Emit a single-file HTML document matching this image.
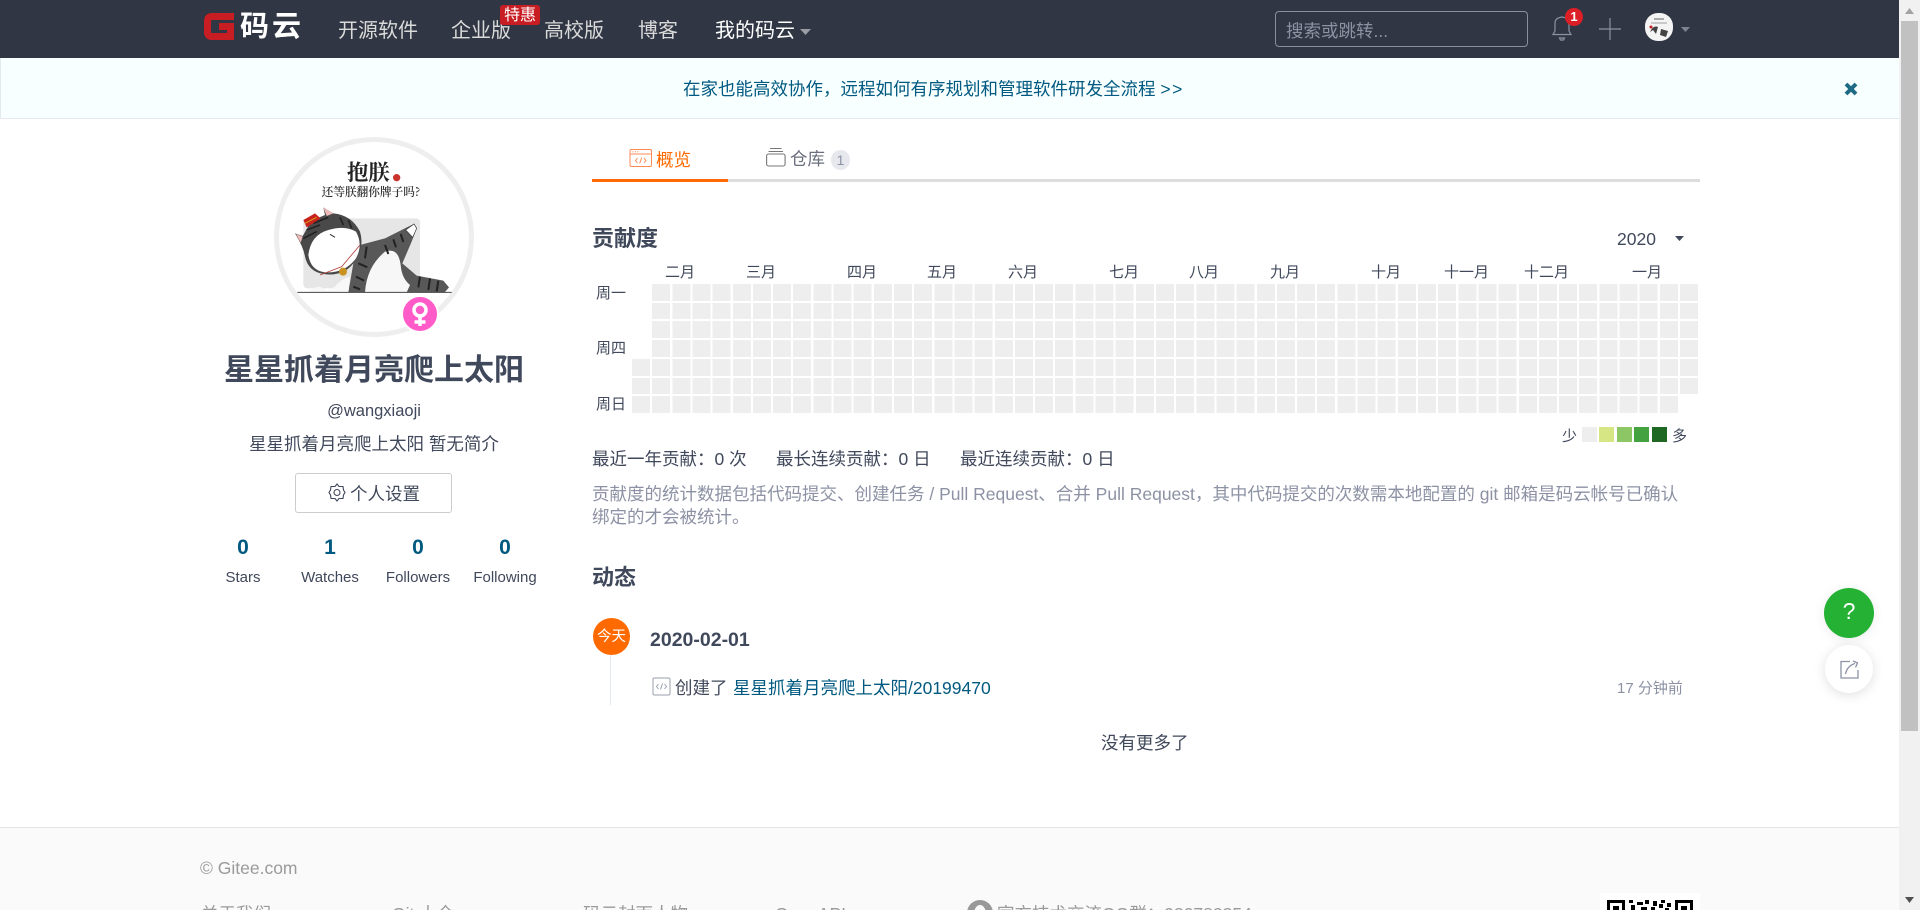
<!DOCTYPE html>
<html lang="zh-CN"><head><meta charset="utf-8"><title>星星抓着月亮爬上太阳 - 码云 Gitee</title>
<style>
html,body{margin:0;padding:0;width:1920px;height:910px;overflow:hidden;background:#fff}
body{position:relative;font-family:"Liberation Sans","Noto Sans CJK SC",sans-serif;font-size:17.5px;color:#40485b}
.a{position:absolute;display:block}
.t{position:absolute;white-space:nowrap;line-height:24px;height:24px}
.c{transform:translateX(-50%)}
.n{color:#dadada;font-size:20px;top:19px}
.m{font-size:15px;top:261px}
.w{font-size:15px;left:596px}
.b{font-weight:700}
.f{color:#9a9a9a}
svg{position:absolute;display:block;overflow:visible}
</style></head><body>
<!-- header -->
<div class="a" style="left:0;top:0;width:1899px;height:58px;background:#303643"></div>
<svg style="left:204px;top:13px" width="30" height="27" viewBox="0 0 30 27"><path d="M30 3.500H8Q3.500 3.500 3.500 8V19Q3.500 23.500 8 23.500H26.500V13.500H15" fill="none" stroke="#c71d23" stroke-width="7"/></svg>
<span class="t b" style="left:240px;top:12px;font-size:29px;height:30px;line-height:30px;color:#fff;letter-spacing:3px">码云</span>
<span class="t n" style="left:338px">开源软件</span>
<span class="t n" style="left:451px">企业版</span>
<span class="a" style="left:500px;top:5px;width:40px;height:20px;background:#c71d23;border-radius:3px"></span>
<span class="t" style="left:504px;top:4px;color:#fff;font-size:16px">特惠</span>
<span class="t n" style="left:544px">高校版</span>
<span class="t n" style="left:638px">博客</span>
<span class="t n" style="left:715px;color:#fff">我的码云</span>
<svg style="left:800px;top:29px" width="11" height="6"><path d="M0 0H11L5.500 6Z" fill="#9a9ca3"/></svg>
<div class="a" style="left:1275px;top:11px;width:251px;height:34px;border:1px solid #8b8f9a;border-radius:4px"></div>
<span class="t" style="left:1286px;top:19px;color:#8c92a4">搜索或跳转...</span>
<svg style="left:1551px;top:15px" width="22" height="26" viewBox="0 0 22 26" fill="none" stroke="#8c92a4" stroke-width="1.200"><path d="M2 19.500H20L18 16V8Q18 3 11 2Q4 3 4 8V16Z"/><path d="M8.500 23H13.500L12.500 25H9.500Z"/></svg>
<span class="a" style="left:1565px;top:8px;width:18px;height:18px;border-radius:9px;background:#dc1f26"></span>
<span class="t b" style="left:1565px;top:5px;width:18px;text-align:center;color:#fff;font-size:13px">1</span>
<svg style="left:1599px;top:18px" width="22" height="22"><path d="M0 11H22M11 0V22" stroke="#8c92a4" stroke-width="1.200"/></svg>
<svg style="left:1645px;top:13px" width="28" height="28" viewBox="0 0 28 28"><rect width="28" height="28" rx="13" fill="#f4f4f4"/><path d="M5 19Q8 12 13 14L11 21L8 17ZM16 16L23 18L21 24L15 22Z" fill="#444"/><path d="M9 6H19" stroke="#aaa" stroke-width="2"/><path d="M6 10H22" stroke="#bbb" stroke-width="1.500"/><circle cx="6" cy="14" r="1.500" fill="#c71d23"/></svg>
<svg style="left:1681px;top:27px" width="9" height="5"><path d="M0 0H9L4.500 5Z" fill="#7f838e"/></svg>
<!-- banner -->
<div class="a" style="left:0;top:58px;width:1898px;height:60px;background:#f7ffff;border:1px solid #e3e9ed;border-top:0"></div>
<span class="t" style="left:683px;top:77px;color:#005980">在家也能高效协作&#xFF0C;远程如何有序规划和管理软件研发全流程 <span style="letter-spacing:1.500px">&gt;&gt;</span></span>
<svg style="left:1844px;top:82px" width="14" height="14"><path d="M2 2L12 12M12 2L2 12" stroke="#1f6a85" stroke-width="4"/></svg>
<!-- avatar -->
<div class="a" style="left:274px;top:137px;width:190px;height:190px;border:5px solid #eee;border-radius:50%"></div>
<svg style="left:270px;top:130px" width="210" height="210" viewBox="0 0 630 630">
<defs><filter id="bl"><feGaussianBlur stdDeviation="1"/></filter></defs>
<g filter="url(#bl)">
<rect x="100" y="265" width="350" height="210" rx="12" fill="#e6e6e6"/>
<text x="231" y="150" font-family="'Noto Serif CJK SC',serif" font-weight="700" font-size="64" fill="#222">抱朕</text>
<circle cx="380" cy="143" r="11" fill="#c9342f"/>
<text x="155" y="198" font-family="'Noto Serif CJK SC',serif" font-weight="600" font-size="35" fill="#333">还等朕翻你牌子吗?</text>
<path d="M235 487L250 400L270 345L345 325L415 290L432 282L440 295L425 335L397 400L440 437L520 452L537 472L525 486Z" fill="#595959"/>
<path d="M285 487Q290 410 345 365Q385 350 392 405Q395 445 420 465L410 487Z" fill="#f7f7f7"/>
<path d="M407 300L432 282L440 295L428 322Z" fill="#fff" stroke="#333" stroke-width="2"/>
<path d="M345 345L355 372M370 328L378 352M392 312L400 336M450 440L445 472M480 445L475 480M505 452L500 484M290 350L285 385M265 400L292 412M258 440L282 452M250 470L270 478" stroke="#222" stroke-width="6" fill="none"/>
<path d="M75 310L98 318L125 272L165 255L160 232L190 250Q245 255 270 305Q285 355 250 400Q220 440 160 432Q115 425 105 380Q100 350 75 310Z" fill="#4a4a4a"/>
<path d="M160 232L190 250L170 258Z" fill="#eeb9b9"/><path d="M78 312L98 320L92 338Z" fill="#eeb9b9"/>
<path d="M115 375Q122 315 175 300Q225 285 258 305Q280 345 258 385Q225 430 165 427Q122 422 115 375Z" fill="#fff"/>
<path d="M130 280L175 262M110 300L150 285M100 325L140 305M210 262L220 285M235 270L245 295" stroke="#222" stroke-width="5" fill="none"/>
<path d="M100 270L135 250L152 265L110 292Z" fill="#c8201e"/>
<path d="M105 280L140 262" stroke="#d9a220" stroke-width="3"/>
<path d="M150 435L215 410L270 345" stroke="#b54040" stroke-width="2.500" fill="none"/>
<circle cx="219" cy="425" r="12" fill="#c99224"/>
<path d="M115 487Q125 472 150 470L172 482L195 470Q215 445 240 440L235 487Z" fill="#f8f8f8"/>
<path d="M180 313L195 322" stroke="#333" stroke-width="3"/>
<path d="M82 487H545" stroke="#444" stroke-width="3"/>
</g>
</svg>
<div class="a" style="left:401px;top:295px;width:34px;height:34px;border:2px solid #fff;border-radius:50%;background:#ff5bc9"></div>
<svg style="left:403px;top:297px" width="34" height="34" viewBox="0 0 34 34" fill="none" stroke="#fff"><circle cx="17" cy="13" r="6" stroke-width="3.500"/><path d="M17 19V29M11.500 25H22.500" stroke-width="3.500"/></svg>
<span class="t c b" style="left:374px;top:355px;height:32px;line-height:32px;font-size:30px">星星抓着月亮爬上太阳</span>
<span class="t c" style="left:374px;top:399px;font-size:16.500px">@wangxiaoji</span>
<span class="t c" style="left:374px;top:432px">星星抓着月亮爬上太阳 暂无简介</span>
<div class="a" style="left:295px;top:473px;width:155px;height:38px;border:1px solid #ccc;border-radius:3px"></div>
<svg style="left:328px;top:483px" width="18" height="19" viewBox="0 0 18 19" fill="none" stroke="#40485b" stroke-width="1.100"><path d="M9 1L11 3.500L15 3.500L15.500 7L17 9.500L15.500 12L15 15.500L11 15.500L9 18L7 15.500L3 15.500L2.500 12L1 9.500L2.500 7L3 3.500L7 3.500Z"/><circle cx="9" cy="9.500" r="3"/></svg>
<span class="t" style="left:350px;top:482px">个人设置</span>
<span class="t b c" style="left:243px;top:536px;font-size:21px;color:#005980">0</span>
<span class="t b c" style="left:330px;top:536px;font-size:21px;color:#005980">1</span>
<span class="t b c" style="left:418px;top:536px;font-size:21px;color:#005980">0</span>
<span class="t b c" style="left:505px;top:536px;font-size:21px;color:#005980">0</span>
<span class="t c" style="left:243px;top:566px;font-size:15px">Stars</span>
<span class="t c" style="left:330px;top:566px;font-size:15px">Watches</span>
<span class="t c" style="left:418px;top:566px;font-size:15px">Followers</span>
<span class="t c" style="left:505px;top:566px;font-size:15px">Following</span>
<!-- tabs -->
<svg style="left:629px;top:148px" width="24" height="20" viewBox="0 0 24 20" fill="none" stroke="#ff8a55" stroke-width="1"><rect x="1" y="1.500" width="21.500" height="17" rx="1.500"/><path d="M1 6H22.500M3.500 3.800H4.500M6 3.800H7M8.500 3.800H9.500M8.500 10L6.500 12.500L8.500 15M15 10L17 12.500L15 15M12.800 9.500L10.700 15.500"/></svg>
<span class="t" style="left:656px;top:148px;color:#ff6a00">概览</span>
<svg style="left:766px;top:147px" width="20" height="20" viewBox="0 0 20 20" fill="none" stroke="#777" stroke-width="1.100"><rect x=".6" y="7" width="18.500" height="12" rx="2"/><path d="M2.500 4.500H17M4 1.500H15.500"/></svg>
<span class="t" style="left:790px;top:147px;color:#6a6f7e">仓库</span>
<span class="a" style="left:831px;top:150px;width:19px;height:20px;border-radius:50%;background:#e6e8ee"></span>
<span class="t" style="left:831px;top:148px;width:19px;text-align:center;font-size:14px;color:#8c92a4">1</span>
<div class="a" style="left:592px;top:179px;width:1108px;height:3px;background:#ddd"></div>
<div class="a" style="left:592px;top:179px;width:136px;height:3px;background:#ff6a00"></div>
<!-- contributions -->
<span class="t b" style="left:592px;top:227px;font-size:22px">贡献度</span>
<span class="t" style="left:1617px;top:227px;font-size:17.500px">2020</span>
<svg style="left:1675px;top:236px" width="9" height="5"><path d="M0 0H9L4.500 5Z" fill="#40485b"/></svg>
<span class="t m" style="left:665px">二月</span><span class="t m" style="left:746px">三月</span><span class="t m" style="left:847px">四月</span><span class="t m" style="left:927px">五月</span><span class="t m" style="left:1008px">六月</span><span class="t m" style="left:1109px">七月</span><span class="t m" style="left:1189px">八月</span><span class="t m" style="left:1270px">九月</span><span class="t m" style="left:1371px">十月</span><span class="t m" style="left:1444px">十一月</span><span class="t m" style="left:1524px">十二月</span><span class="t m" style="left:1632px">一月</span>
<span class="t w" style="top:282px">周一</span><span class="t w" style="top:337px">周四</span><span class="t w" style="top:393px">周日</span>
<svg style="left:0;top:0" width="1920" height="910" fill="none" stroke="#eee" shape-rendering="crispEdges" stroke-dasharray="18 2.154">
<path stroke-width="17" d="M652.154 292.500H1698"/>
<path stroke-width="16" d="M652.154 311H1698"/>
<path stroke-width="17" d="M652.154 329.500H1698"/>
<path stroke-width="17" d="M652.154 348.500H1698"/>
<path stroke-width="17" d="M632 367.500H1698"/>
<path stroke-width="16" d="M632 386H1698"/>
<path stroke-width="17" d="M632 404.500H1678"/>
</svg>
<span class="t" style="left:1562px;top:425px;font-size:15px">少</span>
<div class="a" style="left:1582px;top:427px;width:15px;height:15px;background:#eee"></div>
<div class="a" style="left:1599px;top:427px;width:15px;height:15px;background:#d6e685"></div>
<div class="a" style="left:1617px;top:427px;width:15px;height:15px;background:#8cc665"></div>
<div class="a" style="left:1634px;top:427px;width:15px;height:15px;background:#44a340"></div>
<div class="a" style="left:1652px;top:427px;width:15px;height:15px;background:#1e6823"></div>
<span class="t" style="left:1672px;top:425px;font-size:15px">多</span>
<span class="t" style="left:592px;top:447px">最近一年贡献&#xFF1A;0 次</span>
<span class="t" style="left:776px;top:447px">最长连续贡献&#xFF1A;0 日</span>
<span class="t" style="left:960px;top:447px">最近连续贡献&#xFF1A;0 日</span>
<span class="t" style="left:592px;top:482px;color:#8c92a4">贡献度的统计数据包括代码提交、创建任务 / Pull Request、合并 Pull Request&#xFF0C;其中代码提交的次数需本地配置的 git 邮箱是码云帐号已确认</span>
<span class="t" style="left:592px;top:505px;color:#8c92a4">绑定的才会被统计。</span>
<!-- activity -->
<span class="t b" style="left:592px;top:566px;font-size:22px">动态</span>
<div class="a" style="left:609.500px;top:650px;width:1px;height:55px;background:#e3e9ed"></div>
<div class="a" style="left:593px;top:618px;width:37px;height:37px;border-radius:50%;background:#ff6a00"></div>
<span class="t" style="left:593px;top:625px;width:37px;text-align:center;color:#fff;font-size:14.500px">今天</span>
<span class="t b" style="left:650px;top:628px;font-size:19.500px">2020-02-01</span>
<svg style="left:652px;top:677px" width="19" height="19" viewBox="0 0 19 19" fill="none" stroke="#9aa0ad" stroke-width="1"><rect x="1" y="1" width="17" height="17" rx="1.500"/><path d="M6.500 7L4.500 9.500L6.500 12M12.500 7L14.500 9.500L12.500 12M10.500 6.500L8.500 12.500"/></svg>
<span class="t" style="left:675px;top:676px">创建了</span>
<span class="t" style="left:733px;top:676px;color:#005980">星星抓着月亮爬上太阳/20199470</span>
<span class="t" style="left:1617px;top:677px;font-size:15px;color:#8c92a4">17 分钟前</span>
<span class="t" style="left:1101px;top:731px">没有更多了</span>
<!-- fab -->
<div class="a" style="left:1824px;top:588px;width:50px;height:50px;border-radius:50%;background:#24b134;box-shadow:0 2px 12px rgba(0,0,0,.08)"></div>
<span class="t" style="left:1824px;top:599px;width:50px;text-align:center;color:#fff;font-size:23px;font-weight:500">?</span>
<div class="a" style="left:1825px;top:645px;width:48px;height:48px;border-radius:50%;background:#fff;box-shadow:0 2px 12px rgba(0,0,0,.13)"></div>
<svg style="left:1840px;top:660px" width="20" height="19" viewBox="0 0 20 19" fill="none" stroke="#8c92a4" stroke-width="1.300"><path d="M10 1.500H1V18H18V10M5.500 14Q7 6 15 3.500M13 1L17.500 3L15.500 7.500"/></svg>
<!-- footer -->
<div class="a" style="left:0;top:827px;width:1899px;height:83px;background:#fafafa;border-top:1px solid #e5e5e5"></div>
<span class="t f" style="left:200px;top:856px">© Gitee.com</span>
<span class="t f" style="left:201px;top:902px">关于我们</span>
<span class="t f" style="left:392px;top:902px">Git 大全</span>
<span class="t f" style="left:583px;top:902px">码云封面人物</span>
<span class="t f" style="left:775px;top:902px">OpenAPI</span>
<svg style="left:967px;top:900px" width="26" height="26"><circle cx="13" cy="13" r="13" fill="#999"/><ellipse cx="13" cy="14" rx="6" ry="9" fill="#fafafa"/></svg>
<span class="t f" style="left:997px;top:902px">官方技术交流QQ群&#xFF1A;930782354</span>
<div class="a" style="left:1600px;top:893px;width:100px;height:17px;background:#fff"></div>
<svg style="left:1607px;top:900px" width="86" height="10" fill="#000" shape-rendering="crispEdges"><path fill-rule="evenodd" d="M0 0H18V10H15V3H3V10H0ZM68 0H86V10H83V3H71V10H68Z"/><path d="M6 6H12V10H6ZM74 6H80V10H74ZM22 0H26V3H22ZM30 2H36V5H30ZM24 5H28V10H24ZM38 0H42V4H38ZM34 7H40V10H34ZM46 1H50V6H46ZM44 7H48V10H44ZM54 0H58V3H54ZM52 4H56V8H52ZM60 3H64V7H60ZM58 8H62V10H58Z"/></svg>
<!-- scrollbar -->
<div class="a" style="left:1899px;top:0;width:21px;height:910px;background:#f1f1f1"></div>
<div class="a" style="left:1901px;top:21px;width:17px;height:710px;background:#c1c1c1"></div>
<svg style="left:1905px;top:8px" width="9" height="6"><path d="M0 6H9L4.500 0Z" fill="#a3a3a3"/></svg>
<svg style="left:1905px;top:897px" width="9" height="6"><path d="M0 0H9L4.500 6Z" fill="#505050"/></svg>
</body></html>
